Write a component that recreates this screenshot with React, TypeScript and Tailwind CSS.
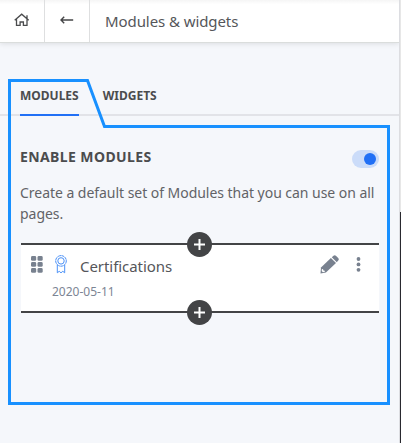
interface Module {
  title: string;
  date: string;
}

const TABS = ["MODULES", "WIDGETS"];

const MODULES: Module[] = [{ title: "Certifications", date: "2020-05-11" }];

function HomeIcon() {
  return (
    <svg width="16" height="14" viewBox="0 0 16 14" fill="none" stroke="#4b4c4e" strokeWidth="1.3">
      <path d="M.7 7.3 7.7 1.2l7 6.1M2.5 6v6.4h3.6V9h3.3v3.4H13V6M13 5.6V2.2" />
    </svg>
  );
}

function BackIcon() {
  return (
    <svg width="14" height="8" viewBox="0 0 14 8" fill="none" stroke="#444547" strokeWidth="1.4">
      <path d="M13.2 4H1M4.2.7 1 4l3.2 3.3" />
    </svg>
  );
}

function GripIcon() {
  return (
    <svg width="12" height="17" viewBox="0 0 12 17" fill="#78818f">
      {[0, 6, 12].map((y) => (
        <g key={y}>
          <rect x="0" y={y} width="5.2" height="4.8" rx="1.4" />
          <rect x="6.5" y={y} width="5.2" height="4.8" rx="1.4" />
        </g>
      ))}
    </svg>
  );
}

function RibbonIcon() {
  return (
    <svg width="12" height="19" viewBox="0 0 12 19" fill="none" stroke="#4b91f7" strokeWidth="1">
      <circle cx="6" cy="5.9" r="5.3" strokeDasharray="2.5 .3" />
      <circle cx="6" cy="5.9" r="3.2" />
      <path d="M2.3 10v7.8l1.9-1.5L6 17.8l1.8-1.5 1.9 1.5V10" />
    </svg>
  );
}

function PencilIcon() {
  return (
    <svg width="19" height="19" viewBox="0 0 19 19" fill="#78818f">
      <path d="M10.9 3 16 8 5.9 17.4 0.5 18.4 1 12.6Z" />
      <path d="M11.8 2.2 13.5.7a1.8 1.8 0 0 1 2.4 0L18.2 3a1.8 1.8 0 0 1 0 2.5l-1.4 1.7Z" />
      <path d="m1.9 13.9 1.2.3.3 1.3 1.4.3.1 1-2 .4-1.2-1.1Z" fill="white" />
    </svg>
  );
}

function AddButton() {
  return (
    <button className="flex size-[25px] items-center justify-center rounded-full bg-[#434446]">
      <svg width="11" height="11" viewBox="0 0 11 11" stroke="white" strokeWidth="2">
        <path d="M5.5 0v11M0 5.5h11" />
      </svg>
    </button>
  );
}

function ModuleRow({ title, date }: Module) {
  return (
    <div className="relative ml-px h-[70px] w-[358px] border-y-2 border-[#434446] bg-white">
      <div className="flex h-[38px] items-center pl-[10px]">
        <GripIcon />
        <div className="ml-3">
          <RibbonIcon />
        </div>
        <span className="ml-[13px] flex-1 pt-[3px] text-[15px] leading-5 tracking-[-0.05px] text-[#55565a]">
          {title}
        </span>
        <PencilIcon />
        <svg className="mr-[18px] ml-[17px]" width="5" height="15" viewBox="0 0 5 15" fill="#78818f">
          <circle cx="2.5" cy="2" r="1.9" />
          <circle cx="2.5" cy="7.4" r="1.9" />
          <circle cx="2.5" cy="12.8" r="1.9" />
        </svg>
      </div>
      <p className="pt-px pl-[31px] text-xs leading-4 text-[#7c8594]">{date}</p>
      <div className="absolute -top-[13px] left-[166px]">
        <AddButton />
      </div>
      <div className="absolute -bottom-[14px] left-[166px]">
        <AddButton />
      </div>
    </div>
  );
}

export default function App() {
  return (
    <div className="relative flex h-[443px] w-[401px] overflow-hidden bg-[#f5f7fb] font-['Noto_Sans','Open_Sans',sans-serif]">
      <main className="w-[399px]">
        <header className="flex h-[43px] border-b border-[#dadddc] bg-linear-to-b from-[#f5f5f5] to-white to-10% shadow-[0_1px_5px_rgba(0,0,0,0.1)]">
          <button className="flex w-[45px] items-center justify-center border-r border-[#dedfe0] pb-[2px]">
            <HomeIcon />
          </button>
          <button className="flex w-[45px] items-center justify-center border-r border-[#dedfe0] pb-[2px]">
            <BackIcon />
          </button>
          <h1 className="pl-[15px] text-[15px] leading-[43px] tracking-[-0.08px] text-[#55565a]">
            Modules &amp; widgets
          </h1>
        </header>

        <nav className="mt-[33px] flex h-[40px] gap-6 border-b-2 border-[#e2e3e8] pl-5">
          {TABS.map((tab, i) => (
            <button
              key={tab}
              className={`h-[40px] border-b-2 pt-[2px] text-xs font-bold text-[#4b4c4e] ${
                i === 0 ? "border-[#2170f5]" : "border-transparent"
              }`}
            >
              {tab}
            </button>
          ))}
        </nav>

        <section className="px-5 pt-[31px]">
          <div className="flex h-5 items-center justify-between">
            <h2 className="text-sm leading-5 font-bold tracking-[0.4px] text-[#4b4c4e]">ENABLE MODULES</h2>
            <div className="mt-[3px] flex h-[18px] w-[27px] items-center justify-end rounded-full bg-[#cbdcf9] pr-[3px]">
              <span className="size-3 rounded-full bg-[#2170f5]" />
            </div>
          </div>
          <p className="mt-[15px] mb-[19px] text-sm leading-[21px] tracking-[-0.04px] text-[#626367]">
            Create a default set of Modules that you can use on all pages.
          </p>
          {MODULES.map((m) => (
            <ModuleRow key={m.title} {...m} />
          ))}
        </section>
      </main>

      <aside className="flex w-[2px] flex-col border-l border-[#dcdde1]">
        <div className="h-[212px] bg-[#e7e7e7]" />
        <div className="flex-1 bg-[#29292f]" />
      </aside>

      {/* highlighted area around the active tab and its panel */}
      <svg
        className="pointer-events-none absolute inset-0"
        width="401"
        height="443"
        fill="none"
        stroke="#1890ff"
        strokeWidth="3"
      >
        <path d="M9.5 80.5H87.5L104.5 126.5H388.5V403.5H9.5Z" />
      </svg>
    </div>
  );
}
